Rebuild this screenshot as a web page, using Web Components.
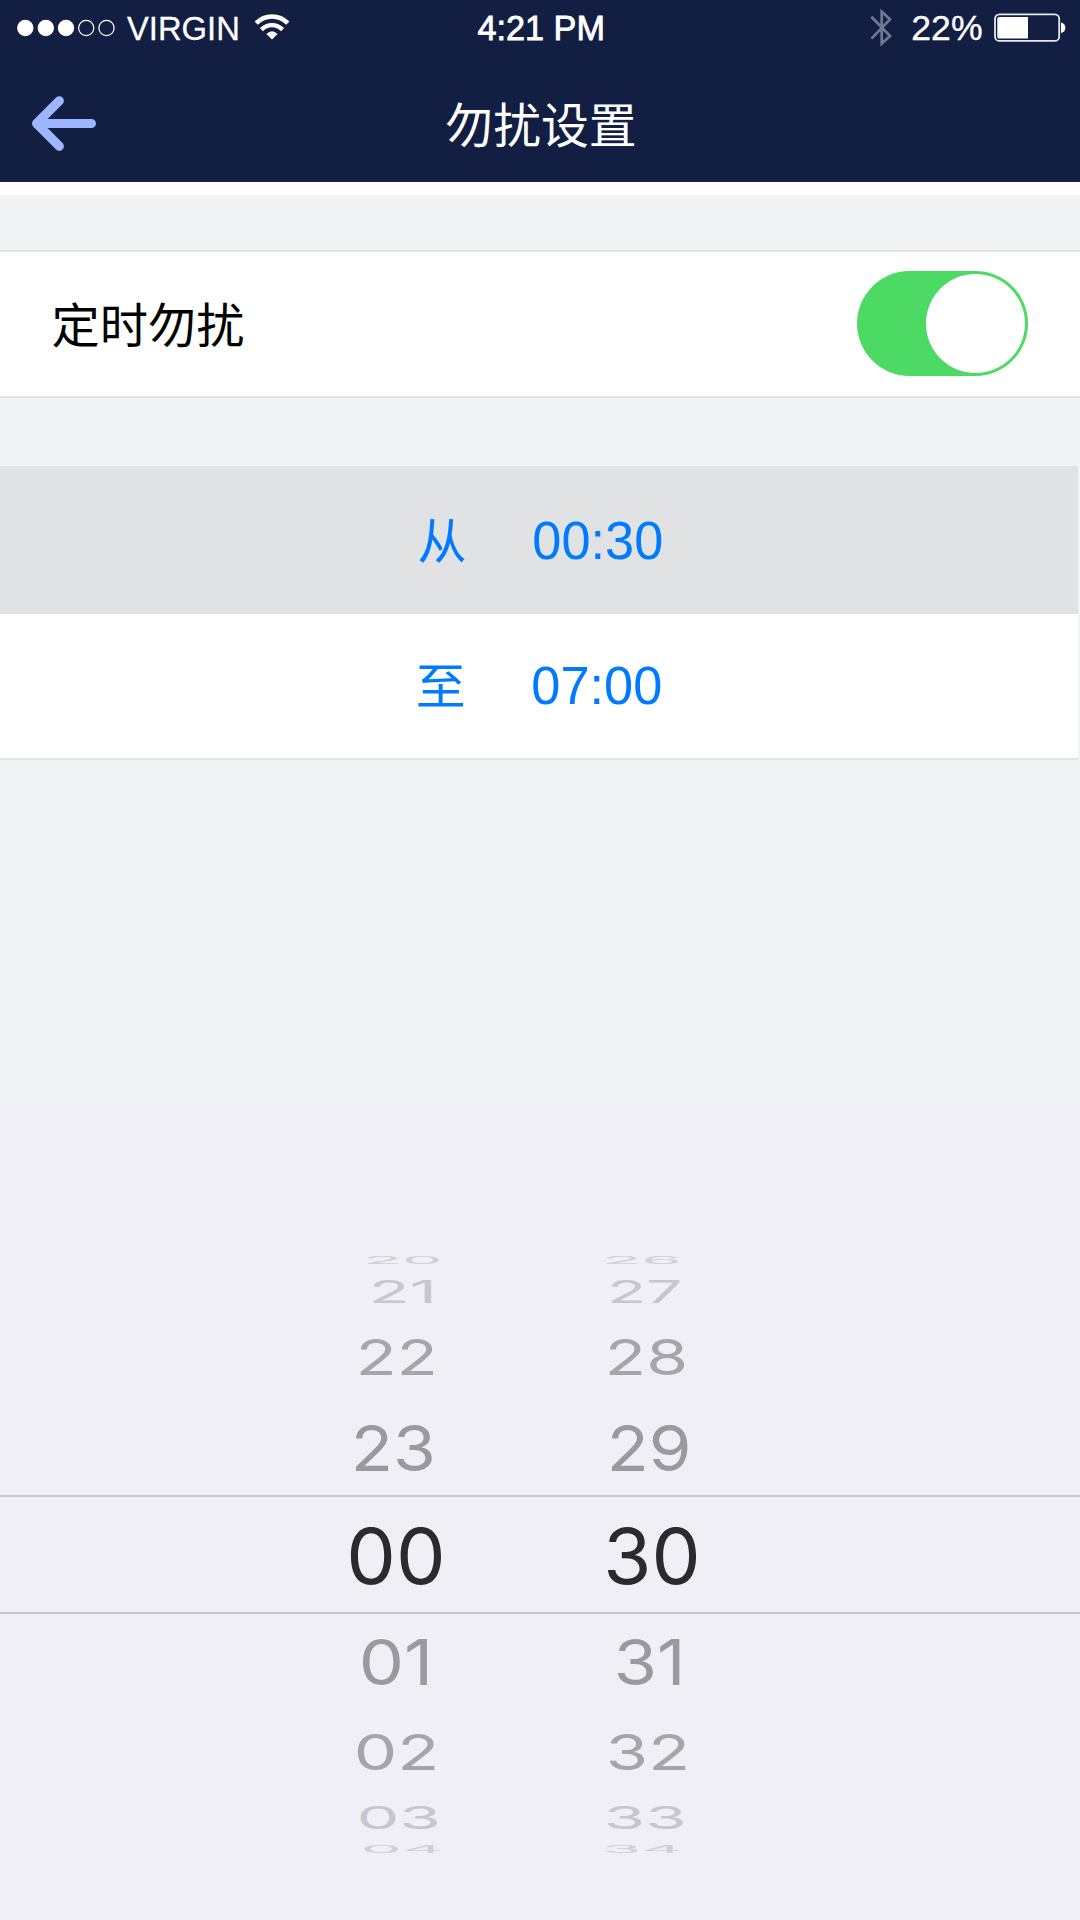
<!DOCTYPE html>
<html lang="zh-CN">
<head>
<meta charset="utf-8">
<title>勿扰设置</title>
<style>
html,body{margin:0;padding:0;background:#f1f3f5}
body{width:1080px;height:1920px;overflow:hidden;font-family:"Liberation Sans","Noto Sans CJK SC",sans-serif}
</style>
</head>
<body>
<dnd-screen></dnd-screen>
<script>
const define = (name, html, setup) => {
  const t = document.createElement('template');
  t.innerHTML = html;
  customElements.define(name, class extends HTMLElement {
    connectedCallback() {
      if (this.shadowRoot) return;
      this.attachShadow({mode: 'open'}).append(t.content.cloneNode(true));
      if (setup) setup(this, this.shadowRoot);
    }
  });
};

/* Text whose glyph ink fills exactly w x h. */
const FONTS = {
  sans: '"Liberation Sans",sans-serif',
  cjk: '"Noto Sans CJK SC",sans-serif',
  wheel: 'Inter,sans-serif'
};
const ctx = document.createElement('canvas').getContext('2d');
define('ink-text', `<style>
:host{display:block;flex:none;white-space:pre}
span{display:block;width:max-content;line-height:1;transform-origin:0 0}
</style><span></span>`, (el, root) => {
  const num = (k, d = 0) => parseFloat(el.getAttribute(k) ?? d);
  const w = num('w'), h = num('h'), size = num('size', 48);
  const span = root.querySelector('span');
  const family = FONTS[el.getAttribute('font') || 'sans'];
  const text = el.getAttribute('text');
  span.textContent = text;
  span.style.fontFamily = family;
  span.style.fontSize = size + 'px';
  ctx.font = size + 'px ' + family;
  const f = ctx.measureText(text);
  const A = Math.round(f.fontBoundingBoxAscent), D = Math.round(f.fontBoundingBoxDescent);
  const base = Math.floor((size - A - D) / 2) + A;
  /* ink bounds are measured ten times larger, for sub-pixel precision */
  ctx.font = size * 10 + 'px ' + family;
  const m = ctx.measureText(text);
  const up = m.actualBoundingBoxAscent / 10, down = m.actualBoundingBoxDescent / 10;
  const lt = m.actualBoundingBoxLeft / 10, rt = m.actualBoundingBoxRight / 10;
  const sx = w / (lt + rt), sy = h / (up + down);
  span.style.transform = `matrix(${sx},0,0,${sy},${lt * sx},${-(base - up) * sy})`;
  el.style.width = w + 'px';
  el.style.height = h + 'px';
});

define('signal-dots', `<style>:host{display:block}svg{display:block}</style>
<svg width="100" height="18" viewBox="0 0 100 18"><g fill="#fff"><circle cx="8.3" cy="9" r="8.2"/><circle cx="28.8" cy="9" r="8.2"/><circle cx="49" cy="9" r="8.2"/></g><g fill="none" stroke="#fff" stroke-width="1.2"><circle cx="69.2" cy="9" r="7.6"/><circle cx="89.5" cy="9" r="7.6"/></g></svg>`);

define('wifi-icon', `<style>:host{display:block}svg{display:block}</style>
<svg width="36" height="28" viewBox="0 0 36 28"><g fill="none" stroke="#fff"><path d="M2.2 10.2C11 1.2 25 1.2 33.8 10.2" stroke-width="4.6"/><path d="M7.4 16.6C13.5 10.6 22.5 10.6 28.6 16.6" stroke-width="4.4"/></g><path d="M12.4 21Q18 15.6 23.6 21L18 26.6Z" fill="#fff"/></svg>`);

define('bluetooth-icon', `<style>:host{display:block}svg{display:block}</style>
<svg width="24" height="40" viewBox="0 0 24 40" fill="none" stroke="#6f7890" stroke-width="2.7"><path d="M1.4 8.8L20 28L11.7 35.6V3.6L20 11.4L1.4 30.6"/></svg>`);

define('battery-icon', `<style>:host{display:block}svg{display:block}</style>
<svg width="72" height="30" viewBox="0 0 72 30"><rect x="1" y="1.3" width="64.2" height="26.6" rx="4.5" fill="none" stroke="#fff" stroke-opacity=".9" stroke-width="1.8"/><path d="M5 4H34V25.5H5Q3.3 25.5 3.3 23.7V5.8Q3.3 4 5 4Z" fill="#fff"/><path d="M67 9.5Q71.3 10.5 71.3 14.7T67 20Z" fill="#fff"/></svg>`);

define('status-bar', `<style>
:host{display:flex;height:54px;align-items:flex-start;box-sizing:border-box;padding:0 15px 0 17px}
div{display:flex;align-items:flex-start}
.l{width:461px}.r{width:210px;margin-left:auto}
signal-dots{margin-top:18.5px}.v{margin:15.6px 0 0 10px;-webkit-text-stroke:.3px #fff}wifi-icon{margin:13px 0 0 16.5px}
.c{margin-top:15.2px;-webkit-text-stroke:.8px #fff}
bluetooth-icon{margin:8px 0 0 15px}.p{margin:15.2px 0 0 19.3px;-webkit-text-stroke:.3px #fff}battery-icon{margin:13px 0 0 12.2px}
</style>
<div class="l"><signal-dots></signal-dots><ink-text class="v" text="VIRGIN" size="34" w="110.2" h="24.2"></ink-text><wifi-icon></wifi-icon></div>
<ink-text class="c" text="4:21 PM" size="34" w="124.6" h="24.5"></ink-text>
<div class="r"><bluetooth-icon></bluetooth-icon><ink-text class="p" text="22%" size="34" w="68.5" h="25.2"></ink-text><battery-icon></battery-icon></div>`);

define('back-arrow', `<style>:host{display:block}svg{display:block}</style>
<svg width="64" height="56" viewBox="0 0 64 56" fill="none" stroke="#9cb7ff" stroke-width="9.2" stroke-linecap="round" stroke-linejoin="round"><path d="M27.3 4.8L4.6 27.5L27.3 50.3M7 27.5H59.4"/></svg>`);

define('app-header', `<style>
:host{display:block;height:182px;background:#121f43;color:#fff}
nav{display:flex;align-items:flex-start}
back-arrow{margin:42px 0 0 32px}.t{margin:48.5px 0 0 350.2px}
</style>
<status-bar></status-bar><nav><back-arrow></back-arrow><ink-text class="t" font="cjk" text="勿扰设置" w="188.5" h="44.5"></ink-text></nav>`);

define('toggle-switch', `<style>
:host{display:flex;box-sizing:border-box;width:171px;height:105px;border-radius:52.5px;background:#4cd964;padding:3px;justify-content:flex-end}
i{width:99px;height:99px;border-radius:50%;background:#fff}
</style><i></i>`);

define('toggle-row', `<style>
:host{display:flex;justify-content:space-between;align-items:flex-start;height:144px;border:solid #e1e2e4;border-width:2px 0;background:#fff;margin-top:55px;color:#000;padding:0 52px 0 53.3px}
.t{margin-top:49.8px}toggle-switch{margin-top:19px}
</style><ink-text class="t" font="cjk" text="定时勿扰" w="190" h="45.3"></ink-text><toggle-switch></toggle-switch>`);

define('time-rows', `<style>
:host{display:block;width:1078px;margin-top:68px;color:#007aff}
div{display:flex;align-items:flex-start;box-sizing:border-box}
.a{height:148px;background:#e1e2e4;padding:53px 0 0 418.8px}
.b{height:146px;background:#fff;border-bottom:2px solid #e1e2e4;padding:51px 0 0 418px}
.a .n{margin:2.2px 0 0 69.5px}.b .n{margin:.6px 0 0 70px}
</style>
<div class="a"><ink-text font="cjk" text="从" w="46" h="44.3"></ink-text><ink-text class="n" size="54" text="00:30" w="128" h="39"></ink-text></div>
<div class="b"><ink-text font="cjk" text="至" w="45.3" h="40.8"></ink-text><ink-text class="n" size="54" text="07:00" w="128" h="38.8"></ink-text></div>`);

/* One wheel column: each entry is text, left, top, ink width, ink height, colour. */
const WHEELS = {
  hours: [['20',366.5,1256,72,7.7,'#cfcfd5'],['21',372.6,1280.2,58.5,23.5,'#c6c6cc'],['22',360,1338,73.5,37.3,'#a5a5aa'],['23',354.6,1424.2,77,48.3,'#9a9a9e'],['00',349.6,1525.7,91.5,59.2,'#2b2b2d'],['01',361.6,1636.8,65.5,48.5,'#9a9a9e'],['02',356.6,1733.5,78,38.2,'#a5a5aa'],['03',359.6,1805,77,24,'#c6c6cc'],['04',363.6,1845,76,8,'#cfcfd5']],
  minutes: [['26',605.5,1256,72,7.7,'#cfcfd5'],['27',610.5,1280.2,69,23.5,'#c6c6cc'],['28',609,1338,75.3,37.6,'#a5a5aa'],['29',610.5,1424.2,76.5,48.3,'#9a9a9e'],['30',607,1525.7,89.6,59.2,'#2b2b2d'],['31',616.5,1636.8,63,48.5,'#9a9a9e'],['32',608.5,1733.5,76.7,38.2,'#a5a5aa'],['33',607,1805,75.7,24,'#c6c6cc'],['34',605,1845,74,8,'#cfcfd5']]
};
define('wheel-column', `<style>:host{display:block;width:200px;height:816px;flex:none}</style>`, (el, root) => {
  const left = +el.getAttribute('left');
  let y = 1104;
  for (const [text, x, top, w, h, color] of WHEELS[el.getAttribute('kind')]) {
    const t = document.createElement('ink-text');
    const a = {font: 'wheel', size: 80, text, w, h};
    for (const k in a) t.setAttribute(k, a[k]);
    t.style.cssText = `color:${color};margin-top:${top - y}px;margin-left:${x - left}px`;
    y = top + h;
    root.append(t);
  }
});

define('time-picker', `<style>
:host{display:flow-root;position:relative;height:816px;margin-top:344px;background:#efeff5}
section{display:flex;padding-left:300px;gap:50px}
section wheel-column{display:flow-root}
.band{position:absolute;left:0;right:0;top:391px;height:115px;border:solid #c6c6cb;border-width:2px 0}
</style>
<div class="band"></div>
<section><wheel-column kind="hours" left="300"></wheel-column><wheel-column kind="minutes" left="550"></wheel-column></section>`);

define('dnd-screen', `<style>
:host{display:flow-root;width:1080px;height:1920px;overflow:hidden;background:#f1f3f5}
.gap{height:13px;background:#fff}
</style>
<app-header></app-header><div class="gap"></div><toggle-row></toggle-row><time-rows></time-rows><time-picker></time-picker>`);
</script>
</body>
</html>
